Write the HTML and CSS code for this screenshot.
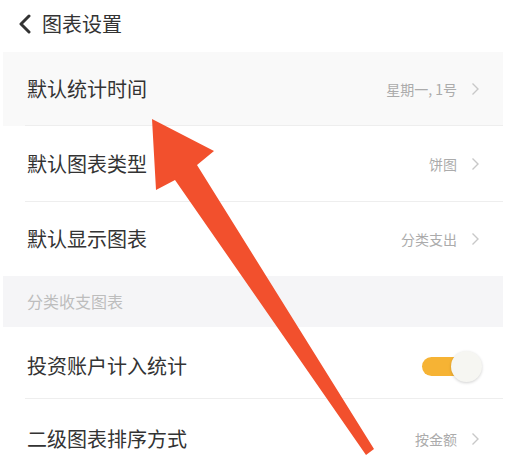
FILE: index.html
```html
<!DOCTYPE html>
<html lang="zh">
<head>
<meta charset="utf-8">
<link rel="stylesheet" href="styles.css">
</head>
<body>
<div class="page">
  <header class="topbar">
    <svg class="back" width="14" height="20" viewBox="0 0 14 20"><path d="M11 2 L3 10 L11 18" fill="none" stroke="#333" stroke-width="3" stroke-linecap="round" stroke-linejoin="round"/></svg>
    <span class="title">图表设置</span>
  </header>
  <div class="list">
    <div class="row pressed">
      <span class="label">默认统计时间</span>
      <span class="value">星期一, 1号</span>
      <svg class="chev" width="9" height="14" viewBox="0 0 9 14"><path d="M1.5 1.5 L7 7 L1.5 12.5" fill="none" stroke="#c8c8c8" stroke-width="1.4"/></svg>
    </div>
    <div class="row tall">
      <span class="label">默认图表类型</span>
      <span class="value">饼图</span>
      <svg class="chev" width="9" height="14" viewBox="0 0 9 14"><path d="M1.5 1.5 L7 7 L1.5 12.5" fill="none" stroke="#c8c8c8" stroke-width="1.4"/></svg>
    </div>
    <div class="row last">
      <span class="label">默认显示图表</span>
      <span class="value">分类支出</span>
      <svg class="chev" width="9" height="14" viewBox="0 0 9 14"><path d="M1.5 1.5 L7 7 L1.5 12.5" fill="none" stroke="#c8c8c8" stroke-width="1.4"/></svg>
    </div>
  </div>
  <div class="section">分类收支图表</div>
  <div class="list">
    <div class="row short">
      <span class="label">投资账户计入统计</span>
      <span class="toggle"><span class="thumb"></span></span>
    </div>
    <div class="row last lower">
      <span class="label">二级图表排序方式</span>
      <span class="value">按金额</span>
      <svg class="chev" width="9" height="14" viewBox="0 0 9 14"><path d="M1.5 1.5 L7 7 L1.5 12.5" fill="none" stroke="#c8c8c8" stroke-width="1.4"/></svg>
    </div>
  </div>
  <svg class="arrow" width="506" height="470" viewBox="0 0 506 470">
    <polygon points="152,119 214,151 197,165 374,449 366,455 175,180 156,190" fill="#f2502d"/>
  </svg>
</div>
</body>
</html>
```
FILE: styles.css
```css
* { box-sizing: border-box; }
html, body { margin: 0; padding: 0; background: #fff; }
body {
  font-family: "Noto Sans CJK SC", "Noto Sans", sans-serif;
  color: #333;
  width: 506px;
  height: 470px;
  overflow: hidden;
}
.page {
  position: relative;
  width: 506px;
  height: 470px;
  padding: 0 3px;
}
.topbar {
  height: 52px;
  display: flex;
  align-items: center;
  padding-left: 15px;
  gap: 10px;
}
.back { display: block; margin-top: -4px; }
.title {
  font-size: 20px;
  line-height: 1;
  margin-top: -5px;
  color: #333;
}
.list { background: #fff; }
.row {
  height: 74px;
  display: flex;
  align-items: center;
  padding: 0 24px 0 24px;
  position: relative;
}
.row.tall { height: 76px; }
.row.short { height: 72px; padding-top: 6px; }
.row.lower { padding-top: 6px; }
.row::after {
  content: "";
  position: absolute;
  left: 22px;
  right: 0;
  bottom: 0;
  height: 1px;
  background: #eeeeee;
}
.row.last::after { display: none; }
.row.pressed { background: #f9f9f9; }
.label {
  font-size: 20px;
  line-height: 1;
  flex: 1;
  color: #333;
}
.value {
  font-size: 14px;
  color: #ababab;
  margin-right: 14px;
}
.chev { display: block; margin-right: -1px; }
.section {
  height: 51px;
  background: #f5f5f7;
  font-size: 16px;
  color: #bdbdbd;
  padding-left: 24px;
  display: flex;
  align-items: center;
  padding-bottom: 2px;
}
.toggle {
  position: relative;
  width: 50px;
  height: 19px;
  border-radius: 10px;
  background: #f6b334;
  margin-right: 7px;
}
.thumb {
  position: absolute;
  right: -10px;
  top: -6px;
  width: 31px;
  height: 31px;
  border-radius: 50%;
  background: #f6f6f2;
  box-shadow: 0 1px 3px rgba(0,0,0,0.18);
}
.arrow {
  position: absolute;
  left: 0;
  top: 0;
  pointer-events: none;
}
```
